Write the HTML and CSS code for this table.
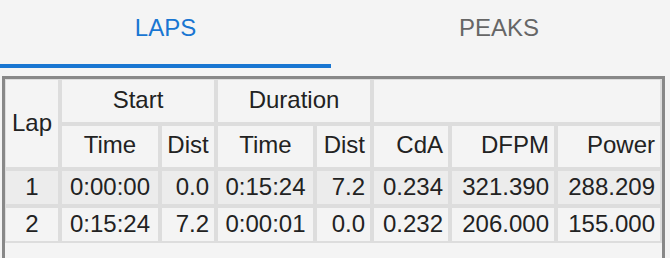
FILE: index.html
```html
<!DOCTYPE html>
<html>
<head>
<meta charset="utf-8">
<link rel="stylesheet" href="styles.css">
</head>
<body>
<div class="tabs">
  <div class="tab active">LAPS</div>
  <div class="tab wide">PEAKS</div>
</div>
<div class="panel">
  <table class="laps">
    <colgroup>
      <col class="c-lap">
      <col class="c-time">
      <col class="c-dist">
      <col class="c-time2">
      <col class="c-dist2">
      <col class="c-cda">
      <col class="c-dfpm">
      <col class="c-power">
    </colgroup>
    <thead>
      <tr class="h1">
        <th rowspan="2" class="center mid">Lap</th>
        <th colspan="2" class="center">Start</th>
        <th colspan="2" class="center">Duration</th>
        <th colspan="3"></th>
      </tr>
      <tr class="h2">
        <th class="center">Time</th>
        <th class="center">Dist</th>
        <th class="center">Time</th>
        <th class="right">Dist</th>
        <th class="right">CdA</th>
        <th class="right">DFPM</th>
        <th class="right">Power</th>
      </tr>
    </thead>
    <tbody>
      <tr class="odd">
        <td class="center">1</td>
        <td class="center">0:00:00</td>
        <td class="right">0.0</td>
        <td class="center">0:15:24</td>
        <td class="right">7.2</td>
        <td class="right">0.234</td>
        <td class="right">321.390</td>
        <td class="right">288.209</td>
      </tr>
      <tr>
        <td class="center">2</td>
        <td class="center">0:15:24</td>
        <td class="right">7.2</td>
        <td class="center">0:00:01</td>
        <td class="right">0.0</td>
        <td class="right">0.232</td>
        <td class="right">206.000</td>
        <td class="right">155.000</td>
      </tr>
    </tbody>
  </table>
</div>
</body>
</html>
```

FILE: styles.css
```css
html, body {
  margin: 0;
  padding: 0;
  background: #f4f4f4;
  overflow: hidden;
  font-family: "Liberation Sans", Arial, sans-serif;
  color: #222;
}

.tabs {
  display: flex;
  width: 670px;
  height: 68px;
}

.tab {
  flex: 0 0 331px;
  box-sizing: border-box;
  height: 68px;
  padding-top: 14px;
  font-size: 24px;
  line-height: 28px;
  text-align: center;
  color: #666;
}

.tab.wide {
  flex-basis: 336px;
}

.tab.active {
  color: #1976d2;
  border-bottom: 4px solid #1976d2;
}

.panel {
  margin: 8px 0 0 2px;
  width: 663px;
  height: 184px;
  box-sizing: border-box;
  border: 3px solid #888;
  border-bottom: 0;
  overflow: hidden;
}

.laps {
  margin: -1px 0 0 -1px;
  border-collapse: separate;
  border-spacing: 0;
  table-layout: fixed;
  width: 658px;
  font-size: 24px;
  line-height: 28px;
}

.c-lap { width: 56px; }
.c-time { width: 100px; }
.c-dist { width: 56px; }
.c-time2 { width: 99px; }
.c-dist2 { width: 57px; }
.c-cda { width: 78px; }
.c-dfpm { width: 106px; }
.c-power { width: 106px; }

.laps th,
.laps td {
  border: 2px solid #dddddd;
  background: #f4f4f4;
  font-weight: normal;
  white-space: nowrap;
  overflow: hidden;
  padding: 2px 0 3px 0;
  vertical-align: top;
}

.laps tr.h1 th {
  padding-top: 6px;
  padding-bottom: 8px;
}

.laps tr.h2 th {
  padding-top: 5px;
  padding-bottom: 8px;
}

.laps th.mid {
  vertical-align: middle;
  padding: 0;
}

.laps tr.odd td {
  background: #ececec;
}

.center { text-align: center; }
.right { text-align: right; padding-right: 5px !important; }
```
